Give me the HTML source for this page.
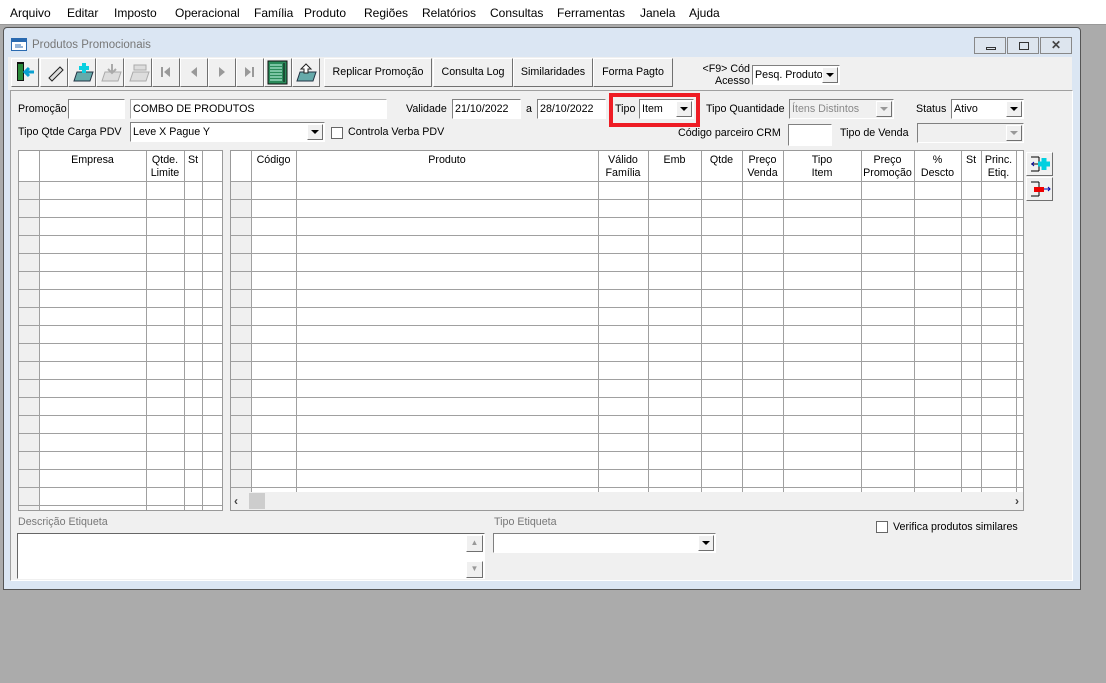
<!DOCTYPE html>
<html><head><meta charset="utf-8"><style>
*{box-sizing:border-box;margin:0;padding:0}
body{width:1106px;height:683px;background:#ababab;font-family:"Liberation Sans",sans-serif;font-size:10.7px;color:#000;position:relative;overflow:hidden}
.a{position:absolute}
.menu{left:0;top:0;width:1106px;height:25px;background:#fff;border-bottom:1px solid #999}
.menu span{position:absolute;top:6px;font-size:12px}
.win{left:3px;top:27px;width:1078px;height:563px;background:#dbe6f3;border:1px solid #555;border-radius:4px 4px 0 0}
.btn{position:absolute;background:#f0f0f0;border:1px solid;border-color:#fff #707070 #707070 #fff;text-align:center;line-height:26px}
.in{position:absolute;background:#fff;border:1px solid;border-color:#808080 #fff #fff #808080;height:20px;line-height:18px;padding-left:2px;white-space:nowrap;overflow:hidden}
.dd{position:absolute;right:1px;top:1px;width:16px;height:16px;background:#f0f0f0;border:1px solid;border-color:#fff #707070 #707070 #fff}
.dd:after{content:"";position:absolute;left:3px;top:5px;border:4px solid transparent;border-top:4px solid #000;border-bottom:0}
.dis:after{border-top-color:#999}
.lbl{position:absolute;white-space:nowrap}
.grid{position:absolute;background:#fff;border:1px solid #999;overflow:hidden}
.rows{position:absolute;left:0;right:0;top:30px;bottom:0;background:repeating-linear-gradient(to bottom,#a0a0a0 0,#a0a0a0 1px,transparent 1px,transparent 18px)}
.col{position:absolute;top:0;bottom:0;width:1px;background:#a0a0a0}
.h{position:absolute;top:3px;text-align:center;line-height:13px}
.ind{position:absolute;left:0;top:30px;width:20px;bottom:0;background:#f0f0f0}
</style></head><body>
<div class="a menu">
<span style="left:10px">Arquivo</span><span style="left:67px">Editar</span><span style="left:114px">Imposto</span><span style="left:175px">Operacional</span><span style="left:254px">Família</span><span style="left:304px">Produto</span><span style="left:364px">Regiões</span><span style="left:422px">Relatórios</span><span style="left:490px">Consultas</span><span style="left:557px">Ferramentas</span><span style="left:640px">Janela</span><span style="left:689px">Ajuda</span>
</div>
<div class="a win"></div>
<svg class="a" style="left:11px;top:38px" width="16" height="13"><rect x=".5" y=".5" width="15" height="12" fill="#fff" stroke="#2a6ab0"/><rect x="1" y="1" width="14" height="3" fill="#2a6ab0"/><path d="M4 7h6M4 9h8" stroke="#2a6ab0"/></svg>
<div class="lbl" style="left:32px;top:39px;color:#777;font-size:11.5px">Produtos Promocionais</div>
<div class="btn" style="left:974px;top:37px;width:32px;height:17px;border-color:#888;background:#dde5ee"><div class="a" style="left:11px;top:9px;width:10px;height:3px;border:1px solid #333"></div></div>
<div class="btn" style="left:1007px;top:37px;width:32px;height:17px;border-color:#888;background:#dde5ee"><div class="a" style="left:11px;top:4px;width:10px;height:8px;border:1px solid #333"></div></div>
<div class="btn" style="left:1040px;top:37px;width:32px;height:17px;border-color:#888;background:#dde5ee;line-height:15px;font-weight:bold;color:#444;font-size:12px">✕</div>
<div class="a" style="left:8px;top:57px;width:1064px;height:33px;background:#f0f0f0"></div>
<div class="a" style="left:10px;top:90px;width:1063px;height:491px;background:#f0f0f0;border:1px solid;border-color:#a0a0a0 #fff #fff #a0a0a0"></div>
<div class="btn" style="left:11px;top:58px;width:28px;height:29px"></div>
<svg class="a" style="left:16px;top:61px" width="20" height="22"><rect x="1" y="1" width="7" height="19" fill="#111"/><rect x="2" y="3" width="5" height="16" fill="#2a8a3a"/><path d="M18 11h-8M13 7l-4 4 4 4" stroke="#0aa0d0" stroke-width="3" fill="none"/></svg>
<div class="btn" style="left:40px;top:58px;width:28px;height:29px"></div>
<svg class="a" style="left:45px;top:62px" width="20" height="20"><path d="M4 16l11-11 3 3-11 11z" fill="#ddd" stroke="#222"/></svg>
<div class="btn" style="left:68px;top:58px;width:28px;height:29px"></div>
<svg class="a" style="left:72px;top:61px" width="22" height="22"><path d="M2 20l3-9h16l-3 9z" fill="#6aa" stroke="#234"/><path d="M12 2v10M7 7h10" stroke="#0ad0e0" stroke-width="4"/></svg>
<div class="btn" style="left:96px;top:58px;width:28px;height:29px"></div>
<svg class="a" style="left:100px;top:61px" width="22" height="22"><path d="M2 20l3-9h16l-3 9z" fill="#ddd" stroke="#aaa"/><path d="M12 3v8M8 8l4 4 4-4" stroke="#aaa" stroke-width="2" fill="none"/></svg>
<div class="btn" style="left:124px;top:58px;width:28px;height:29px"></div>
<svg class="a" style="left:128px;top:61px" width="22" height="22"><path d="M2 20l3-9h16l-3 9z" fill="#ddd" stroke="#aaa"/><rect x="6" y="4" width="12" height="5" fill="#ddd" stroke="#aaa"/></svg>
<div class="btn" style="left:152px;top:58px;width:28px;height:29px"></div>
<svg class="a" style="left:159px;top:66px" width="14" height="12"><rect x="2" y="1" width="2" height="10" fill="#999"/><path d="M11 1v10l-6-5z" fill="#999"/></svg>
<div class="btn" style="left:180px;top:58px;width:28px;height:29px"></div>
<svg class="a" style="left:188px;top:66px" width="12" height="12"><path d="M9 1v10l-6-5z" fill="#999"/></svg>
<div class="btn" style="left:208px;top:58px;width:28px;height:29px"></div>
<svg class="a" style="left:216px;top:66px" width="12" height="12"><path d="M3 1v10l6-5z" fill="#999"/></svg>
<div class="btn" style="left:236px;top:58px;width:28px;height:29px"></div>
<svg class="a" style="left:243px;top:66px" width="14" height="12"><path d="M2 1v10l6-5z" fill="#999"/><rect x="9" y="1" width="2" height="10" fill="#999"/></svg>
<div class="btn" style="left:264px;top:58px;width:28px;height:29px"></div>
<svg class="a" style="left:267px;top:60px" width="22" height="25"><rect x="1" y="1" width="19" height="23" fill="#2a8a5a" stroke="#111"/><path d="M3 5h12M3 8h12M3 11h12M3 14h12M3 17h12M3 20h12" stroke="#cfe"/><path d="M17 3v19" stroke="#111"/></svg>
<div class="btn" style="left:292px;top:58px;width:28px;height:29px"></div>
<svg class="a" style="left:295px;top:61px" width="22" height="22"><path d="M2 20l3-9h16l-3 9z" fill="#6aa" stroke="#234"/><path d="M11 3l-5 5h3v4h4v-4h3z" fill="#fff" stroke="#222"/></svg>
<div class="btn" style="left:324px;top:58px;width:108px;height:29px">Replicar Promoção</div>
<div class="btn" style="left:433px;top:58px;width:80px;height:29px">Consulta Log</div>
<div class="btn" style="left:513px;top:58px;width:80px;height:29px">Similaridades</div>
<div class="btn" style="left:593px;top:58px;width:80px;height:29px">Forma Pagto</div>
<div class="lbl" style="left:700px;top:63px;width:50px;line-height:12px;text-align:right">&lt;F9&gt; Cód<br>Acesso</div>
<div class="in" style="left:752px;top:65px;width:88px">Pesq. Produto<div class="dd"></div></div>
<div class="lbl" style="left:18px;top:103px">Promoção</div>
<div class="in" style="left:68px;top:99px;width:57px"></div>
<div class="in" style="left:130px;top:99px;width:257px;border-color:#aaa #fff #fff #aaa">COMBO DE PRODUTOS</div>
<div class="lbl" style="left:406px;top:103px">Validade</div>
<div class="in" style="left:452px;top:99px;width:69px">21/10/2022</div>
<div class="lbl" style="left:526px;top:103px">a</div>
<div class="in" style="left:537px;top:99px;width:69px">28/10/2022</div>
<div class="a" style="left:609px;top:93px;width:91px;height:34px;border:4px solid #ee1c24"></div>
<div class="lbl" style="left:615px;top:103px">Tipo</div>
<div class="in" style="left:639px;top:99px;width:55px">Item<div class="dd"></div></div>
<div class="lbl" style="left:706px;top:103px">Tipo Quantidade</div>
<div class="in" style="left:789px;top:99px;width:105px;background:#f0f0f0;color:#888">Ítens Distintos<div class="dd dis"></div></div>
<div class="lbl" style="left:916px;top:103px">Status</div>
<div class="in" style="left:951px;top:99px;width:73px">Ativo<div class="dd"></div></div>
<div class="lbl" style="left:18px;top:126px">Tipo Qtde Carga PDV</div>
<div class="in" style="left:130px;top:122px;width:195px">Leve X Pague Y<div class="dd"></div></div>
<div class="a" style="left:331px;top:127px;width:12px;height:12px;background:#fff;border:1px solid #666"></div>
<div class="lbl" style="left:348px;top:126px">Controla Verba PDV</div>
<div class="lbl" style="left:678px;top:127px">Código parceiro CRM</div>
<div class="in" style="left:788px;top:124px;width:44px;height:22px"></div>
<div class="lbl" style="left:840px;top:127px">Tipo de Venda</div>
<div class="in" style="left:917px;top:123px;width:107px;background:#f0f0f0"><div class="dd dis"></div></div>
<div class="grid" style="left:18px;top:150px;width:205px;height:361px">
<div class="ind"></div><div class="rows"></div>
<div class="col" style="left:20px"></div><div class="col" style="left:127px"></div><div class="col" style="left:165px"></div><div class="col" style="left:183px"></div><div class="col" style="left:203px"></div>
<div class="h" style="left:20px;width:107px">Empresa</div>
<div class="h" style="left:127px;width:38px">Qtde.<br>Limite</div>
<div class="h" style="left:165px;width:18px">St</div>
</div>
<div class="grid" style="left:230px;top:150px;width:794px;height:361px">
<div class="ind"></div><div class="rows" style="bottom:18px"></div>
<div class="col" style="left:20px;bottom:18px"></div><div class="col" style="left:65px;bottom:18px"></div><div class="col" style="left:367px;bottom:18px"></div><div class="col" style="left:417px;bottom:18px"></div><div class="col" style="left:470px;bottom:18px"></div><div class="col" style="left:511px;bottom:18px"></div><div class="col" style="left:552px;bottom:18px"></div><div class="col" style="left:630px;bottom:18px"></div><div class="col" style="left:683px;bottom:18px"></div><div class="col" style="left:730px;bottom:18px"></div><div class="col" style="left:750px;bottom:18px"></div><div class="col" style="left:785px;bottom:18px"></div>
<div class="h" style="left:20px;width:45px">Código</div>
<div class="h" style="left:65px;width:302px">Produto</div>
<div class="h" style="left:367px;width:50px">Válido<br>Família</div>
<div class="h" style="left:417px;width:53px">Emb</div>
<div class="h" style="left:470px;width:41px">Qtde</div>
<div class="h" style="left:511px;width:41px">Preço<br>Venda</div>
<div class="h" style="left:552px;width:78px">Tipo<br>Item</div>
<div class="h" style="left:630px;width:53px">Preço<br>Promoção</div>
<div class="h" style="left:683px;width:47px">%<br>Descto</div>
<div class="h" style="left:730px;width:20px">St</div>
<div class="h" style="left:750px;width:35px">Princ.<br>Etiq.</div>
<div class="a" style="left:0;bottom:0;width:792px;height:18px;background:#f0f0f0"></div>
<div class="a" style="left:3px;bottom:2px;font-weight:bold;color:#444;font-size:12px">‹</div>
<div class="a" style="left:18px;bottom:1px;width:16px;height:16px;background:#cdcdcd"></div>
<div class="a" style="right:4px;bottom:2px;font-weight:bold;color:#444;font-size:12px">›</div>
</div>
<div class="btn" style="left:1026px;top:152px;width:27px;height:24px"></div>
<svg class="a" style="left:1030px;top:155px" width="22" height="18"><path d="M1 2h8M1 16h8M9 2v14M1 9h8" stroke="#000"/><path d="M14 3v12M8 9h12" stroke="#00d0e0" stroke-width="5"/><path d="M4 7l-2 2 2 2" stroke="#00a" fill="none"/></svg>
<div class="btn" style="left:1026px;top:177px;width:27px;height:24px"></div>
<svg class="a" style="left:1030px;top:180px" width="22" height="18"><path d="M1 2h8M1 16h8M9 2v14" stroke="#000"/><rect x="4" y="7" width="10" height="5" fill="#e00"/><path d="M14 9h6M18 7l2 2-2 2" stroke="#00a" fill="none"/></svg>
<div class="lbl" style="left:18px;top:516px;color:#777">Descrição Etiqueta</div>
<div class="in" style="left:17px;top:533px;width:468px;height:46px;border-color:#666 #fff #fff #666"></div>
<div class="btn" style="left:466px;top:535px;width:17px;height:17px;line-height:14px;font-size:8px;color:#999">▲</div>
<div class="btn" style="left:466px;top:561px;width:17px;height:17px;line-height:14px;font-size:8px;color:#999">▼</div>
<div class="lbl" style="left:494px;top:516px;color:#777">Tipo Etiqueta</div>
<div class="in" style="left:493px;top:533px;width:223px"><div class="dd"></div></div>
<div class="a" style="left:876px;top:521px;width:12px;height:12px;background:#fff;border:1px solid #666"></div>
<div class="lbl" style="left:893px;top:521px">Verifica produtos similares</div>
</body></html>
